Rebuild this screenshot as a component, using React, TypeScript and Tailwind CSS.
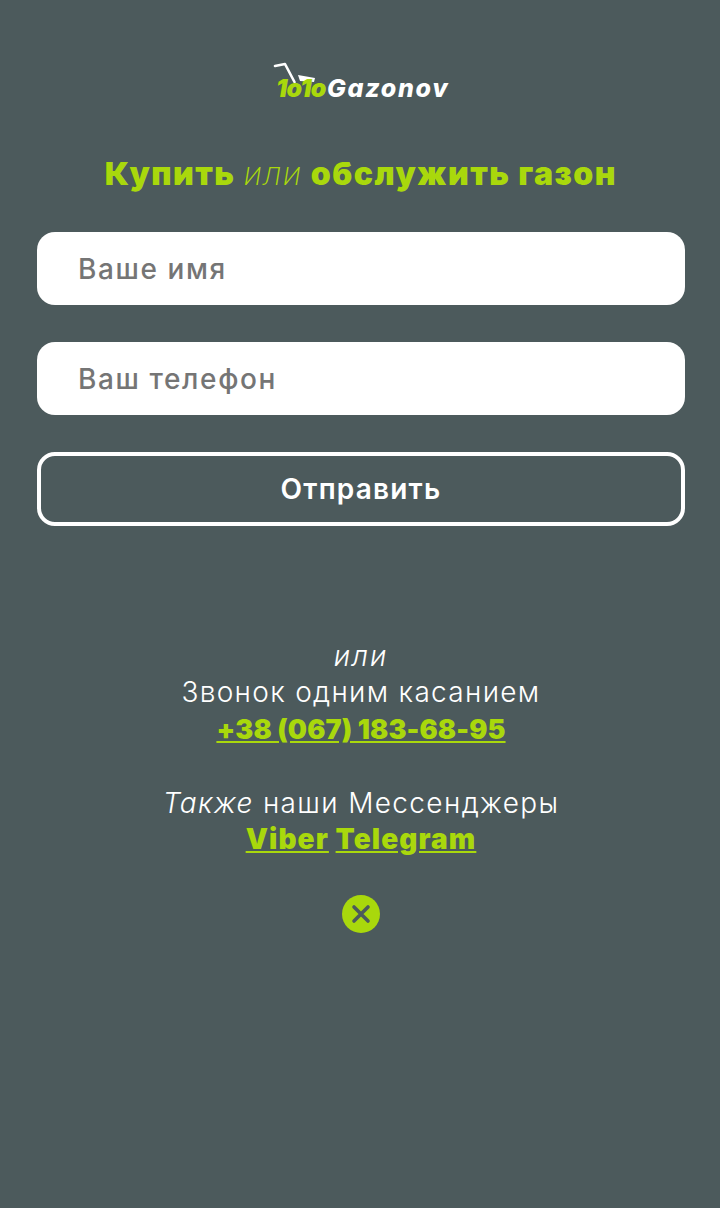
import React from 'react';

const font = "font-['Inter','Liberation_Sans',sans-serif]";

// Brand mark: mower standing on the green "1o1o" part of the wordmark
const Logo: React.FC = () => (
  <div className="relative h-[40px] w-[176px]">
    <svg className="absolute left-0 top-0" width="60" height="26" viewBox="0 0 60 26" fill="none">
      <path d="M2 6 L12 4 L21.5 22" stroke="#fff" strokeWidth="2.6" strokeLinecap="round" strokeLinejoin="round" />
      <path d="M25 15 L42 18 L41 22 L27 21 Z" fill="#fff" />
    </svg>
    <span className="absolute left-[3px] top-[14px] text-[25px] leading-[28px] font-black italic tracking-[-0.9px] text-[#a9d80c]">
      1o1o
    </span>
    <span className="absolute left-[54px] top-[14px] text-[25px] leading-[28px] font-extrabold italic text-white tracking-[1.7px]">
      Gazonov
    </span>
  </div>
);

const Field: React.FC<{ placeholder: string }> = ({ placeholder }) => (
  <input
    type="text"
    placeholder={placeholder}
    className={`${font} block h-[73px] w-full rounded-[18px] bg-white pl-[41px] pr-4 text-[28px] font-medium tracking-[1.6px] text-[#757575] placeholder:text-[#757575] outline-none`}
  />
);

export default function App() {
  return (
    <div className={`${font} flex min-h-[1208px] flex-col items-center bg-[#4c5a5c] pl-[37px] pr-[35px] pt-[60px]`}>
      <Logo />

      <h2 className="mt-[54px] text-center text-[32px] leading-[40px] font-black tracking-[1.5px] whitespace-nowrap text-[#a9d80c]">
        Купить <em className="font-extralight">или</em> обслужить газон
      </h2>

      <form className="mt-[38px] flex w-full flex-col gap-[37px]">
        <Field placeholder="Ваше имя" />
        <Field placeholder="Ваш телефон" />
        <button
          type="button"
          className="h-[74px] w-full rounded-[18px] border-4 border-white text-[28px] font-semibold tracking-[1.2px] text-white"
        >
          Отправить
        </button>
      </form>

      <div className="mt-[112px] text-center text-[28px] leading-[36.4px] text-white">
        <p className="font-light italic tracking-[2px]">или</p>
        <p className="font-light tracking-[1.3px] whitespace-nowrap">Звонок одним касанием</p>
        <p className="h-[37px]">
          <a href="#" className="text-[27px] font-black tracking-[0.1px] text-[#a9d80c] underline">
            +38 (067) 183-68-95
          </a>
        </p>
        <p className="mt-[37px] font-light tracking-[1.35px] whitespace-nowrap">
          <em>Также</em> наши Мессенджеры
        </p>
        <p className="font-black tracking-[1.1px] text-[#a9d80c]">
          <a href="#" className="underline">Viber</a> <a href="#" className="underline">Telegram</a>
        </p>
      </div>

      <button type="button" className="mt-[37px] flex h-[38px] w-[38px] items-center justify-center rounded-full bg-[#a9d80c]">
        <svg width="22" height="22" viewBox="0 0 22 22" fill="none" stroke="#4c5a5c" strokeWidth="3.6" strokeLinecap="round">
          <path d="M4 4 L18 18 M18 4 L4 18" />
        </svg>
      </button>
    </div>
  );
}
